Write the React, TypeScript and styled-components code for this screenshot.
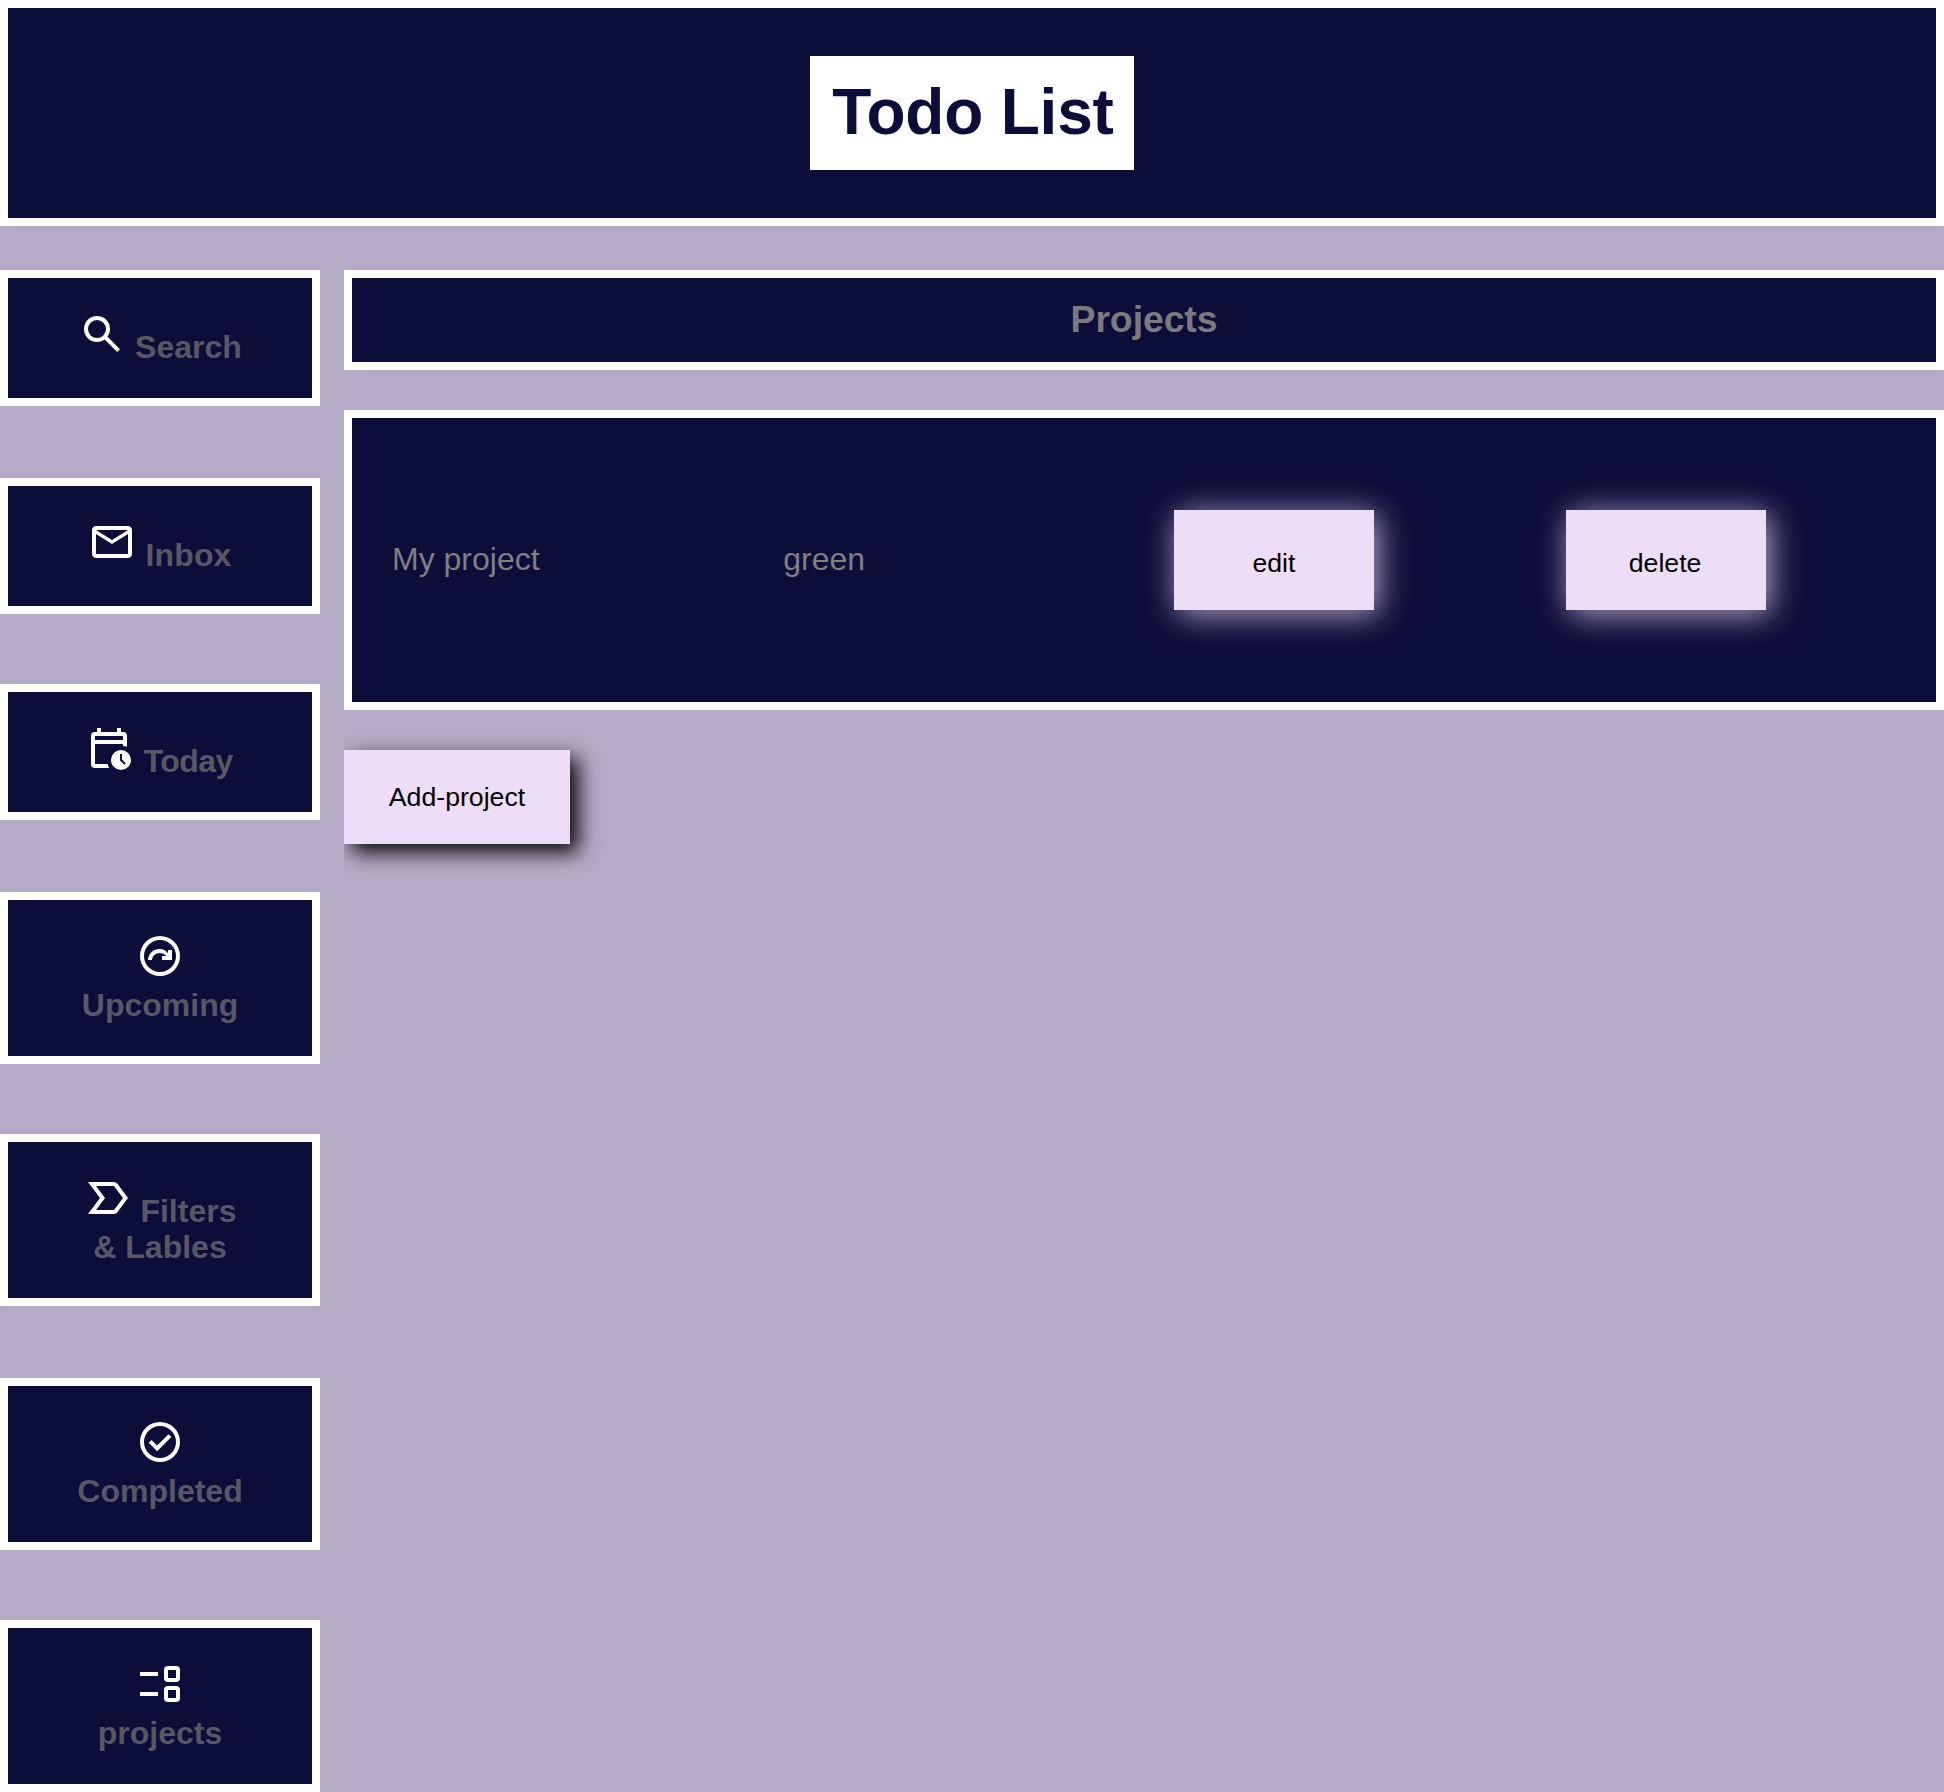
import React from "react";
import styled, { createGlobalStyle } from "styled-components";

const navy = "#0d0d39";
const lilac = "#b5abc7";
const blush = "#eeddf7";

const GlobalStyle = createGlobalStyle`
  * { box-sizing: border-box; }
  body {
    margin: 0;
    background: ${lilac};
    font-family: "Liberation Sans", Arial, sans-serif;
    font-size: 32px;
    line-height: 36px;
  }
`;

const Page = styled.div`
  display: flex;
  flex-direction: column;
  gap: 44px;
  height: 1792px;
  overflow: hidden;
`;

const Header = styled.header`
  display: flex;
  justify-content: center;
  align-items: center;
  height: 226px;
  flex: none;
  background: ${navy};
  border: 8px solid #fff;
`;

const Title = styled.h1`
  margin: 0;
  padding: 20px 19px 22px 21px;
  width: 324px;
  text-align: center;
  white-space: nowrap;
  font-size: 64px;
  line-height: 72px;
  letter-spacing: -0.2px;
  color: ${navy};
  background: #fff;
`;

const Layout = styled.div`
  display: grid;
  grid-template-columns: 320px 1fr;
  column-gap: 24px;
  flex: 1;
`;

const Sidebar = styled.nav`
  display: flex;
  flex-direction: column;
`;

const NavItem = styled.div<{ $tracking?: number }>`
  padding: 32px 64px 33px;
  border: 8px solid #fff;
  background: ${navy};
  color: #585766;
  font-weight: bold;
  letter-spacing: ${({ $tracking = 0 }) => $tracking}px;
  text-align: center;
  &:nth-child(odd) { margin-bottom: 72px; }
  &:nth-child(even) { margin-bottom: 70px; }
  &:last-child { margin-bottom: 0; }
`;

const Icon = styled.svg`
  width: 48px;
  height: 48px;
  fill: #fff;
  vertical-align: baseline;
`;

const Main = styled.main`
  display: flex;
  flex-direction: column;
  align-items: flex-start;
  overflow: hidden;
`;

const Heading = styled.h3`
  margin: 0 0 40px;
  width: 100%;
  height: 100px;
  padding: 20px;
  border: 8px solid #fff;
  background: ${navy};
  color: #7a7a80;
  font-size: 37.44px;
  line-height: 42px;
  letter-spacing: -0.1px;
  text-align: center;
`;

const ProjectRow = styled.div`
  display: grid;
  grid-template-columns: repeat(4, 1fr);
  column-gap: 60.8px;
  align-items: center;
  width: 100%;
  height: 300px;
  margin-bottom: 40px;
  padding: 0 40px;
  border: 8px solid #fff;
  background: ${navy};
  color: #7f7f84;
`;

const Cell = styled.span`
  padding-bottom: 2px;
`;

const Button = styled.button`
  border: 0;
  padding: 0;
  font-family: inherit;
  font-size: 26.667px;
  line-height: 30px;
  color: #000;
  background: ${blush};
`;

const RowButton = styled(Button)`
  width: 200px;
  height: 100px;
  padding: 6px 1px 0 0;
  box-shadow: 4px 4px 30px rgba(237, 220, 247, 0.76);
`;

const AddButton = styled(Button)`
  width: 226px;
  height: 94px;
  box-shadow: 8px 8px 20px #000;
`;

interface NavEntry {
  label: string;
  path: string;
  tracking?: number;
}

const navItems: NavEntry[] = [
  {
    label: "Search",
    path: "M19.6 21L13.3 14.7Q12.55 15.3 11.575 15.65T9.5 16Q6.775 16 4.8875 14.1125T3 9.5Q3 6.775 4.8875 4.8875T9.5 3Q12.225 3 14.1125 4.8875T16 9.5Q16 10.6 15.65 11.575T14.7 13.3L21 19.6ZM9.5 14Q11.375 14 12.6875 12.6875T14 9.5Q14 7.625 12.6875 6.3125T9.5 5Q7.625 5 6.3125 6.3125T5 9.5Q5 11.375 6.3125 12.6875T9.5 14Z",
  },
  {
    label: "Inbox",
    path: "M4 20Q3.175 20 2.5875 19.4125T2 18V6Q2 5.175 2.5875 4.5875T4 4H20Q20.825 4 21.4125 4.5875T22 6V18Q22 18.825 21.4125 19.4125T20 20ZM12 13L4 8V18H20V8ZM12 11L20 6H4Z",
    tracking: 0.15,
  },
  {
    label: "Today",
    path: "M5 2H7V4H15V2H17V4H18A2 2 0 0 1 20 6V11.4Q19.1 11 18 11V10H4V20H10.3Q10.5 21.1 11.1 22H4A2 2 0 0 1 2 20V6A2 2 0 0 1 4 4H5ZM4 6V8H18V6ZM17 13A5 5 0 1 1 17 23A5 5 0 1 1 17 13ZM18.65 20.35L19.35 19.65L17.5 17.8V15H16.5V18.2Z",
    tracking: -0.55,
  },
  {
    label: "Upcoming",
    path: "M12,2A10,10 0 1,0 12,22A10,10 0 1,0 12,2M12,20A8,8 0 1,1 12,4A8,8 0 1,1 12,20M18,14V9H16V10.6C15,9.3 13.5,8.5 11.8,8.5C8.7,8.5 6.1,10.9 6,14H8C8.2,12 9.8,10.5 11.8,10.5C13.2,10.5 14.4,11.1 15.1,12H13V14H18Z",
  },
  {
    label: "Filters & Lables",
    path: "M2 20L8 12L2 4H15Q15.475 4 15.9 4.2125T16.6 4.8L22 12L16.6 19.2Q16.325 19.575 15.9 19.7875T15 20ZM6 18H15L19.5 12L15 6H6L10.5 12Z",
  },
  {
    label: "Completed",
    path: "M12,2A10,10 0 1,0 12,22A10,10 0 1,0 12,2M12,20A8,8 0 1,1 12,4A8,8 0 1,1 12,20M10.6 16.6L17.65 9.55L16.25 8.15L10.6 13.8L7.75 10.95L6.35 12.35Z",
  },
  {
    label: "projects",
    path: "M2,6H11V8H2V6M2,16H11V18H2V16M16,3H20A2,2 0 0,1 22,5V9A2,2 0 0,1 20,11H16A2,2 0 0,1 14,9V5A2,2 0 0,1 16,3M16,5V9H20V5H16M16,13H20A2,2 0 0,1 22,15V19A2,2 0 0,1 20,21H16A2,2 0 0,1 14,19V15A2,2 0 0,1 16,13M16,15V19H20V15H16Z",
  },
];

export default function App() {
  return (
    <Page>
      <GlobalStyle />
      <Header>
        <Title>Todo List</Title>
      </Header>
      <Layout>
        <Sidebar>
          {navItems.map(({ label, path, tracking }) => (
            <NavItem key={label} $tracking={tracking}>
              <Icon viewBox="0 0 24 24">
                <path fillRule="evenodd" d={path} />
              </Icon>{" "}
              {label}
            </NavItem>
          ))}
        </Sidebar>
        <Main>
          <Heading>Projects</Heading>
          <ProjectRow>
            <Cell>My project</Cell>
            <Cell>green</Cell>
            <RowButton>edit</RowButton>
            <RowButton>delete</RowButton>
          </ProjectRow>
          <AddButton>Add-project</AddButton>
        </Main>
      </Layout>
    </Page>
  );
}
